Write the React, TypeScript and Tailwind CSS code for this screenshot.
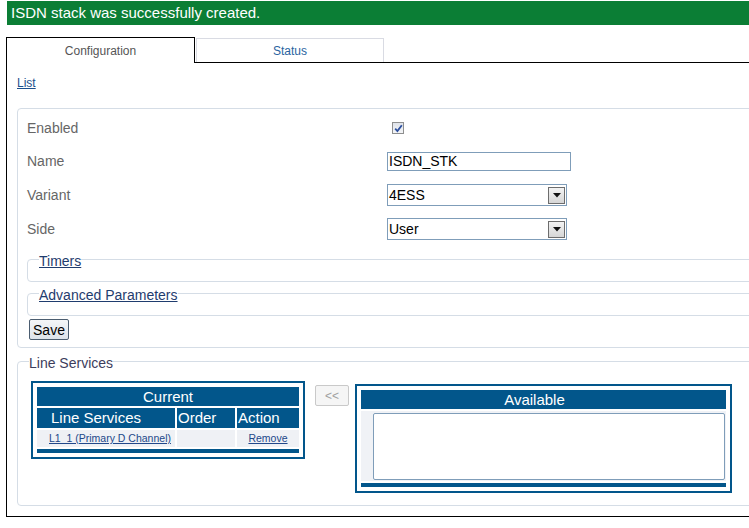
import React from "react";

function Checkbox() {
  return (
    <div className="ml-[5px] w-[12px] h-[12px] border border-[#8e8f8f] bg-gradient-to-b from-[#dfe3ea] to-[#f4f5f7] flex items-center justify-center">
      <svg width="9" height="9" viewBox="0 0 9 9">
        <path d="M1.2 4.6 L3.4 7 L7.8 1.2" fill="none" stroke="#2c4f9e" strokeWidth="1.8" />
      </svg>
    </div>
  );
}

function FakeSelect({ value }: { value: string }) {
  return (
    <div className="w-[180px] h-[22px] border border-[#7f9db9] bg-white flex items-center justify-between">
      <span className="pl-[1px] text-[14px] leading-[16px] text-black">{value}</span>
      <div className="mr-[1px] w-[17px] h-[17px] border border-[#6d6d6d] bg-gradient-to-b from-[#f3f3f3] to-[#d6d6d6] flex items-center justify-center">
        <svg width="8" height="5" viewBox="0 0 8 5">
          <path d="M0 0 L8 0 L4 4.5 Z" fill="#111" />
        </svg>
      </div>
    </div>
  );
}

function Row({ label, h, children }: { label: string; h: string; children: React.ReactNode }) {
  return (
    <div className={`flex items-center ${h}`}>
      <div className="w-[360px] text-[14px] leading-[16px] text-[#666]">{label}</div>
      {children}
    </div>
  );
}

export default function App() {
  return (
    <div className="w-[749px] h-[528px] overflow-hidden bg-white font-['Liberation_Sans',Arial,sans-serif]">
      <div className="ml-[7px] mt-[1px] h-[24px] bg-[#0b7e35] pl-[4px] text-[15px] leading-[24px] text-white">
        ISDN stack was successfully created.
      </div>
      <div className="ml-[6px] mt-[12px] w-[780px]">
        <div className="flex items-end">
          <div className="w-[189px] h-[26px] border border-b-0 border-black flex items-center justify-center text-[12px] leading-[14px] text-[#555]">
            Configuration
          </div>
          <div className="flex-1 border-b border-black">
            <div className="ml-[1px] w-[188px] h-[24px] border border-b-0 border-[#d9dbe3] flex items-center justify-center text-[12px] leading-[14px] text-[#2a64a0]">
              Status
            </div>
          </div>
        </div>
        <div className="h-[454px] border-l border-b border-black pl-[10px] pt-[13px]">
          <a className="block w-fit text-[12px] leading-[14px] text-[#1c4f8c] underline cursor-pointer">List</a>

          <div className="mt-[18px] border border-[#d5dde6] rounded-[4px] pl-[9px] pt-[3px] pb-[7px]">
            <Row label="Enabled" h="h-[32px]">
              <Checkbox />
            </Row>
            <Row label="Name" h="h-[34px]">
              <div className="w-[184px] h-[19px] border border-[#7f9db9] bg-white flex items-center pl-[1px] text-[14px] leading-[16px] text-black">
                ISDN_STK
              </div>
            </Row>
            <Row label="Variant" h="h-[34px]">
              <FakeSelect value="4ESS" />
            </Row>
            <Row label="Side" h="h-[34px]">
              <FakeSelect value="User" />
            </Row>

            <fieldset className="mt-[4px] border border-[#d5dde6] rounded-[4px] pb-[12px] min-w-0">
              <legend className="ml-[11px] pt-[3px] text-[14px] leading-[16px] text-[#1f3c6e] underline cursor-pointer">
                Timers
              </legend>
            </fieldset>
            <fieldset className="mt-[2px] border border-[#d5dde6] rounded-[4px] pb-[12px] min-w-0">
              <legend className="ml-[11px] pt-[3px] text-[14px] leading-[16px] text-[#1f3c6e] underline cursor-pointer">
                Advanced Parameters
              </legend>
            </fieldset>
            <button className="mt-[3px] ml-[2px] w-[40px] h-[21px] border border-[#4b5d70] rounded-[2px] bg-gradient-to-b from-[#f4f6f8] to-[#dde3ea] text-[14px] leading-[16px] text-black flex items-center justify-center">
              Save
            </button>
          </div>

          <fieldset className="mt-[3px] border border-[#d5dde6] rounded-[4px] pb-[12px] min-w-0">
            <legend className="ml-[11px] pt-[4px] text-[14px] leading-[16px] text-[#3d3d5c]">Line Services</legend>
            <div className="mt-[10px] ml-[13px] flex items-start">
              <div className="w-[274px] border-2 border-[#02568b] p-[4px]">
                <div className="h-[19px] bg-[#02568b] text-white text-[15px] leading-[19px] text-center">Current</div>
                <div className="mt-[2px] flex gap-[2px] h-[20px] text-white text-[15px] leading-[20px]">
                  <div className="w-[138px] bg-[#02568b] pl-[14px]">Line Services</div>
                  <div className="w-[58px] bg-[#02568b] pl-[1px]">Order</div>
                  <div className="w-[62px] bg-[#02568b] pl-[1px]">Action</div>
                </div>
                <div className="mt-[2px] flex gap-[2px] h-[17px] text-[10.5px] leading-[17px] text-[#22488a]">
                  <div className="w-[138px] bg-[#eff1f5] pl-[12px] whitespace-nowrap">
                    <span className="underline cursor-pointer">L1_1 (Primary D Channel)</span>
                  </div>
                  <div className="w-[58px] bg-[#eff1f5]"></div>
                  <div className="w-[62px] bg-[#eff1f5] text-center">
                    <span className="underline cursor-pointer">Remove</span>
                  </div>
                </div>
                <div className="mt-[2px] h-[4px] bg-[#02568b]"></div>
              </div>

              <button className="mt-[4px] ml-[10px] w-[34px] h-[21px] border border-[#c9c9c9] rounded-[2px] bg-[#f5f5f5] text-[12px] leading-[14px] text-[#a0a0a0] flex items-center justify-center">
                &lt;&lt;
              </button>

              <div className="mt-[3px] ml-[6px] w-[377px] border-2 border-[#02568b] p-[4px]">
                <div className="h-[19px] bg-[#02568b] text-white text-[15px] leading-[19px] text-center pr-[18px]">Available</div>
                <div className="mt-[2px] h-[70px] bg-[#f0f2f6] pl-[12px] pr-[1px] pt-[2px]">
                  <div className="h-[67px] border border-[#7f9db9] rounded-[2px] bg-white"></div>
                </div>
                <div className="mt-[2px] h-[4px] bg-[#02568b]"></div>
              </div>
            </div>
          </fieldset>
        </div>
      </div>
    </div>
  );
}
